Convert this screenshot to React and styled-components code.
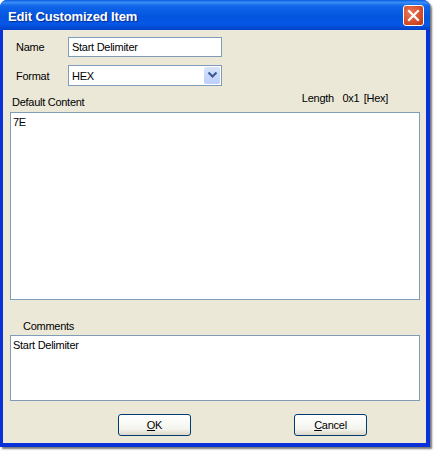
import React from 'react';
import styled, { createGlobalStyle } from 'styled-components';

const Global = createGlobalStyle`
  html, body { margin: 0; padding: 0; background: #fff; }
  body { font-family: "Liberation Sans", Arial, sans-serif; font-size: 11px; letter-spacing: -0.27px; color: #000; }
`;

const Page = styled.div`
  width: 434px;
  height: 451px;
  overflow: hidden;
`;

const Window = styled.div`
  width: 430px;
  height: 447px;
  display: flex;
  flex-direction: column;
  box-sizing: border-box;
  border-radius: 7px 7px 0 0;
  background: #0831d9;
  box-shadow: 2px 2px 2px #777;
`;

const TitleBar = styled.div`
  height: 30px;
  flex: none;
  box-sizing: border-box;
  display: flex;
  align-items: center;
  justify-content: space-between;
  padding: 2px 6px 0 8px;
  border-radius: 7px 7px 0 0;
  background: linear-gradient(180deg, #0a5ee0 0%, #3a8cf5 8%, #0f66ea 20%, #0455de 55%, #0558e6 80%, #0340c8 100%);
`;

const Title = styled.span`
  color: #fff;
  font-weight: bold;
  font-size: 13px;
  letter-spacing: -0.15px;
  text-shadow: 1px 1px 1px #0a2a8c;
`;

const CloseButton = styled.div`
  width: 19px;
  height: 19px;
  margin-top: -1px;
  display: flex;
  align-items: center;
  justify-content: center;
  border: 1px solid #fff;
  border-radius: 3px;
  background: radial-gradient(circle at 35% 35%, #e8795a 0%, #d9512c 55%, #b93413 100%);
`;

const Client = styled.div`
  flex: 1;
  margin: 0 4px 4px 3px;
  padding: 7px 6px 0 7px;
  background: #ebe8d8;
  display: flex;
  flex-direction: column;
`;

const FieldRow = styled.div`
  display: flex;
  align-items: center;
  height: ${(p) => p.$h}px;
  margin-bottom: ${(p) => p.$mb || 0}px;
  padding-left: 6px;
`;

const Label = styled.label`
  width: 52px;
  flex: none;
`;

const TextInput = styled.input`
  width: 154px;
  height: 100%;
  box-sizing: border-box;
  border: 1px solid #7f9db9;
  background: #fff;
  padding: 0 3px;
  font: inherit;
  letter-spacing: inherit;
  color: inherit;
  outline: none;
`;

const Select = styled.div`
  width: 154px;
  height: 100%;
  box-sizing: border-box;
  border: 1px solid #7f9db9;
  background: #fff;
  display: flex;
  align-items: center;
  justify-content: space-between;
  padding: 1px 1px 1px 3px;
`;

const SelectArrow = styled.div`
  width: 16px;
  height: 17px;
  display: flex;
  align-items: center;
  justify-content: center;
  border-radius: 2px;
  background: linear-gradient(180deg, #d8e4fc 0%, #bccffa 100%);
`;

const ContentHeader = styled.div`
  display: flex;
  justify-content: space-between;
  align-items: flex-start;
  box-sizing: border-box;
  height: 25px;
  padding: 9px 32px 0 2px;
  margin-top: 1px;
`;

const LengthLabel = styled.span`
  margin-top: -4px;
  word-spacing: 1.5px;
`;

const TextArea = styled.textarea`
  display: block;
  width: 100%;
  height: ${(p) => p.$h}px;
  box-sizing: border-box;
  flex: none;
  border: 1px solid #7f9db9;
  background: #fff;
  padding: 3px 2px 1px;
  margin: 0;
  font: inherit;
  letter-spacing: inherit;
  color: inherit;
  resize: none;
  overflow: hidden;
  outline: none;
`;

const CommentsLabel = styled.div`
  height: 15px;
  margin-top: 20px;
  padding-left: 13px;
`;

const Buttons = styled.div`
  display: flex;
  gap: 103px;
  margin-top: 13px;
  padding-left: 108px;
`;

const Button = styled.button`
  width: 73px;
  height: 22px;
  padding: 0;
  border: 1px solid #003c74;
  border-radius: 3px;
  background: linear-gradient(180deg, #fff 0%, #f4f4ee 70%, #dcd8c8 100%);
  font: inherit;
  letter-spacing: inherit;
  color: inherit;
  u { text-underline-offset: 1px; }
`;

const App = () => {
  return (
    <Page>
      <Global />
      <Window>
        <TitleBar>
          <Title>Edit Customized Item</Title>
          <CloseButton>
            <svg width="13" height="13" viewBox="0 0 13 13">
              <path d="M2 2 L11 11 M11 2 L2 11" stroke="#fff" strokeWidth="2.2" strokeLinecap="square" />
            </svg>
          </CloseButton>
        </TitleBar>
        <Client>
          <FieldRow $h={20} $mb={8}>
            <Label>Name</Label>
            <TextInput defaultValue="Start Delimiter" />
          </FieldRow>
          <FieldRow $h={21}>
            <Label>Format</Label>
            <Select>
              <span>HEX</span>
              <SelectArrow>
                <svg width="11" height="9" viewBox="0 0 11 9">
                  <path d="M1.5 1.5 L5.5 5.5 L9.5 1.5" fill="none" stroke="#3d5a94" strokeWidth="2.2" />
                </svg>
              </SelectArrow>
            </Select>
          </FieldRow>
          <ContentHeader>
            <span>Default Content</span>
            <LengthLabel>Length&nbsp; 0x1 [Hex]</LengthLabel>
          </ContentHeader>
          <TextArea $h={188} defaultValue="7E" />
          <CommentsLabel>Comments</CommentsLabel>
          <TextArea $h={66} defaultValue="Start Delimiter" />
          <Buttons>
            <Button><u>O</u>K</Button>
            <Button><u>C</u>ancel</Button>
          </Buttons>
        </Client>
      </Window>
    </Page>
  );
};

export default App;
